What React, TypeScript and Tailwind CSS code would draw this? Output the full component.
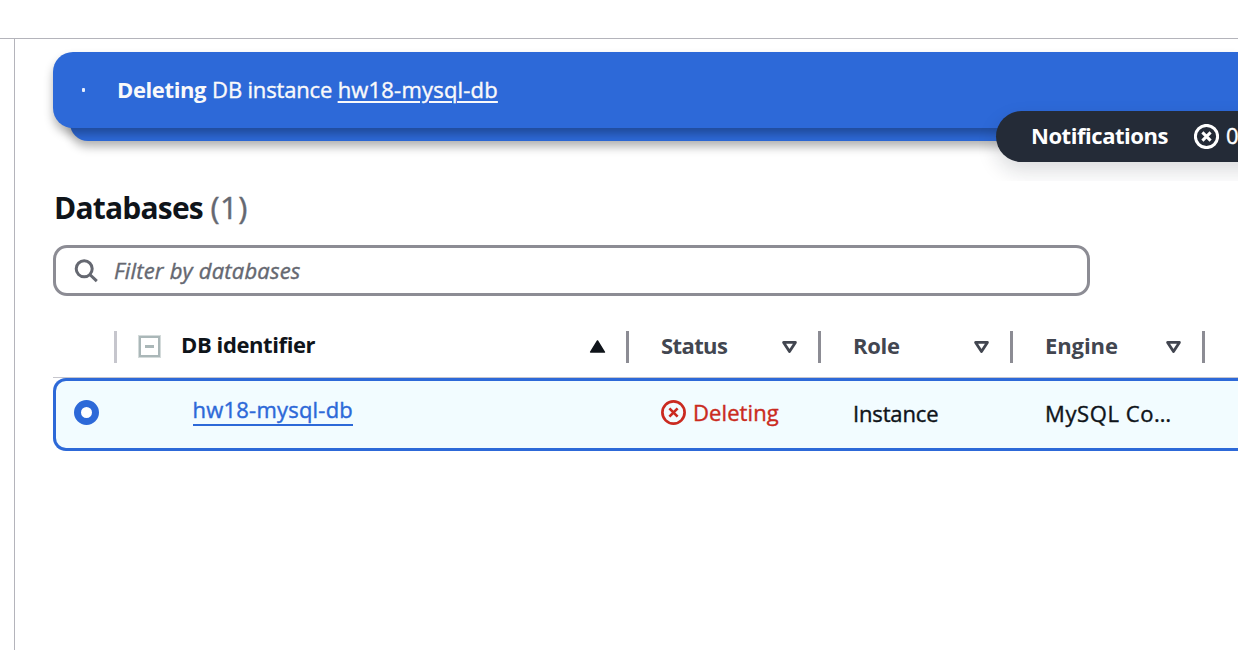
import type { ReactNode } from "react";

function CircleX({ className, width }: { className: string; width: number }) {
  return (
    <svg className={className} viewBox="0 0 25 25" fill="none" stroke="currentColor" strokeWidth={width}>
      <circle cx="12.5" cy="12.5" r="11.1" />
      <path d="M8.4 8.4l8.2 8.2M16.6 8.4l-8.2 8.2" />
    </svg>
  );
}

function SortArrow({ filled = false }: { filled?: boolean }) {
  return filled ? (
    <svg className="h-[13px] w-[17px] shrink-0" viewBox="0 0 17 13" fill="#0f141a" stroke="#0f141a" strokeWidth="1.5" strokeLinejoin="round">
      <path d="M8.5 1L15.4 12.1H1.6z" />
    </svg>
  ) : (
    <svg className="h-[14px] w-[17px] shrink-0" viewBox="0 0 17 14" fill="none" stroke="#424650" strokeWidth="2.8" strokeLinejoin="round">
      <path d="M2.6 2.4h11.8L8.5 11.6z" />
    </svg>
  );
}

function HeaderCell({ children, className = "" }: { children: ReactNode; className?: string }) {
  return (
    <div className={`flex h-8 items-center justify-between border-r-[3px] border-[#8c8c94] pr-[20px] pb-[1px] pl-[32px] font-bold text-[#424650] [-webkit-text-stroke:0] ${className}`}>
      {children}
    </div>
  );
}

export default function App() {
  return (
    <div className="flex h-[650px] w-[1238px] flex-col overflow-hidden bg-white font-['Open_Sans','Noto_Sans',sans-serif] text-[22px] leading-[30px] whitespace-nowrap text-[#0f141a] [-webkit-text-stroke:0.4px_currentColor] [&_b]:[-webkit-text-stroke:0]">
      <div className="h-[39px] shrink-0 border-b border-[#b4b4bb]" />
      <main className="ml-[14px] flex-1 border-l border-[#b4b4bb]">
        <section className="relative h-[142px] overflow-hidden pt-[13px] pl-[38px]">
          <div className="relative z-10 flex h-[76px] items-center rounded-l-[20px] bg-[#2d69d8] text-[#f9f9fa] shadow-[0_6px_10px_rgba(0,0,0,0.29)]">
            <span className="ml-[29px] h-[4px] w-[3px] rounded-[1px] bg-[#e8effc]" />
            <p className="mb-[2px] ml-[32px]">
              <b className="tracking-[-0.38px]">Deleting</b>
              <span className="ml-[6px] tracking-[-0.17px]">DB instance</span>
              <a className="ml-[5.5px] tracking-[0.2px] underline decoration-2 underline-offset-[3px]">hw18-mysql-db</a>
            </p>
          </div>
          <div className="ml-[17px] -mt-[27px] h-[40px] rounded-bl-[18px] bg-[#2d69d8] shadow-[0_6px_10px_rgba(0,0,0,0.29)]" />
          <div className="absolute top-[72px] left-[981px] z-20 flex h-[51px] w-[320px] items-center rounded-l-[26px] bg-[#242b37] pb-[1px] pl-[35px] text-white shadow-[0_9px_20px_rgba(20,26,40,0.15)]">
            <b className="mb-[2px] w-[163px] tracking-[-0.45px]">Notifications</b>
            <CircleX className="size-[25px]" width={3} />
            <span className="mb-[2px] ml-[7px]">0</span>
          </div>
        </section>

        <section className="pl-[38px]">
          <h1 className="flex h-[64px] items-center pb-[11px] pl-[1px] text-[30px] leading-[40px]">
            <b className="tracking-[-0.8px]">Databases</b>
            <span className="mb-[2px] ml-[7.5px] text-[31px] tracking-[0.5px] text-[#656871]">(1)</span>
          </h1>
          <div className="flex h-[51px] w-[1037px] items-center rounded-[14px] border-[3px] border-[#8c8c94] pl-[18px] text-[#656871]">
            <svg className="size-[25px]" viewBox="0 0 25 25" fill="none" stroke="currentColor" strokeWidth="3">
              <circle cx="10.2" cy="10.8" r="8" />
              <path d="M15.8 16.5l7 6.7" />
            </svg>
            <i className="mb-[2px] ml-[15px] tracking-[0.2px]">Filter by databases</i>
          </div>

          <div className="mt-[35px] flex h-[47px] border-b border-[#c6c6cd]">
            <div className="h-8 w-[64px] shrink-0 border-r-[3px] border-[#c6c6cd]" />
            <div className="flex h-8 w-[512px] shrink-0 items-center border-r-[3px] border-[#8c8c94] pr-[20px] pb-[2px] pl-[21px]">
              <svg className="size-[23px]" viewBox="0 0 23 23" fill="none" stroke="#aab7b8">
                <rect x="0.5" y="0.5" width="22" height="22" strokeOpacity="0.5" />
                <rect x="2" y="2" width="19" height="19" strokeWidth="2" />
                <path d="M7 11.5h9" strokeWidth="3" />
              </svg>
              <b className="mb-[4px] ml-[20px] tracking-[-0.4px]">DB identifier</b>
              <span className="ml-auto flex"><SortArrow filled /></span>
            </div>
            <HeaderCell className="w-[192px] shrink-0 tracking-[-0.6px]"><span className="mb-[3px]">Status</span><SortArrow /></HeaderCell>
            <HeaderCell className="w-[192px] shrink-0 tracking-[-0.3px]"><span className="mb-[3px]">Role</span><SortArrow /></HeaderCell>
            <HeaderCell className="w-[192px] shrink-0 tracking-[-0.1px]"><span className="mb-[3px]">Engine</span><SortArrow /></HeaderCell>
          </div>

          <div className="flex h-[73px] items-center rounded-l-[13px] border-y-[3px] border-l-[3px] border-[#2d69d8] bg-[#f2fcff]">
            <div className="flex w-[136px] shrink-0 pb-[4px] pl-[18px]">
              <span className="size-[25px] rounded-full border-[7px] border-[#2d69d8] bg-white" />
            </div>
            <div className="flex w-[468px] shrink-0 pb-[9px] pl-[0.5px]">
              <a className="h-[32px] border-b-2 border-[#2d69d8] tracking-[0.22px] text-[#2d69d8]">hw18-mysql-db</a>
            </div>
            <div className="flex w-[192px] shrink-0 items-center pb-[4px] pl-[1px] text-[#ca2a20]">
              <CircleX className="size-[25px]" width={2.7} />
              <span className="mb-[1px] ml-[7px] tracking-[0.1px]">Deleting</span>
            </div>
            <div className="w-[192px] shrink-0 pb-[3px] pl-[1px] tracking-[-0.15px]">Instance</div>
            <div className="w-[192px] shrink-0 pb-[3px] pl-[1px] tracking-[0.6px]">MySQL Co…</div>
          </div>
        </section>
      </main>
    </div>
  );
}
